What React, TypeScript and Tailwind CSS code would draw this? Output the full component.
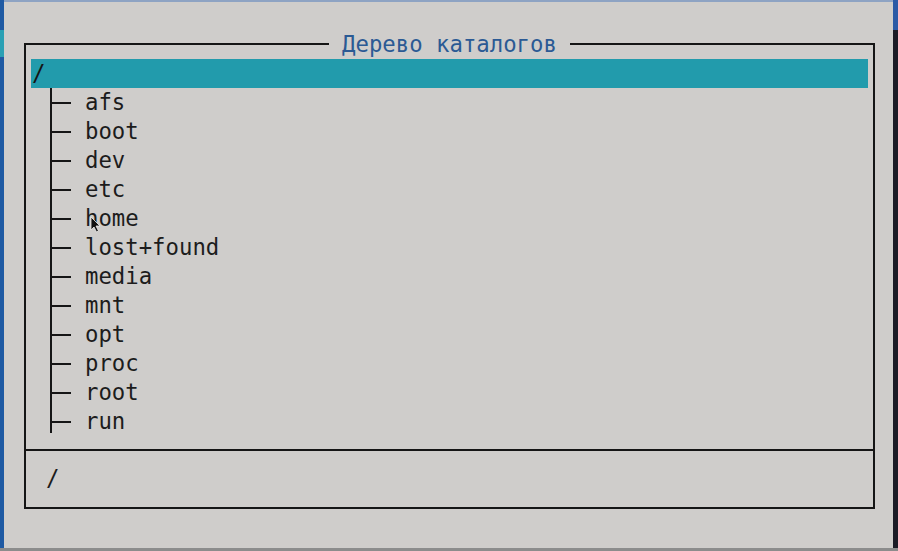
import React from "react";

const items = ["afs", "boot", "dev", "etc", "home", "lost+found", "media", "mnt", "opt", "proc", "root", "run"];

export default function App() {
  const mono = { fontFamily: '"DejaVu Sans Mono", "Liberation Mono", monospace' };
  return (
    <div className="relative w-[898px] h-[551px] overflow-hidden bg-[#cfcdcb]" style={mono}>
      {/* top strip */}
      <div className="absolute left-0 top-0 w-[898px] h-[2px] bg-[#8ea3c3]" />
      {/* left strip */}
      <div className="absolute left-0 top-0 w-[4px] h-[551px] bg-[#1f5aa3]">
        <div className="mt-[30px] h-[27px] bg-[#2aa0b4]" />
      </div>
      {/* right strip */}
      <div className="absolute right-0 top-0 w-[5px] h-[551px] bg-[#1b1b26]">
        <div className="h-[30px] bg-[#2c5aa6]" />
      </div>
      {/* bottom strip */}
      <div className="absolute left-0 bottom-0 w-[898px] h-[3px] bg-[#8c8c8c]" />

      {/* dialog */}
      <div className="pt-[43px] pl-[24px]">
        <div className="relative w-[851px] h-[466px] border-2 border-[#151515] flex flex-col">
          <div className="absolute left-0 right-0 -top-[15px] flex justify-center">
            <span className="bg-[#cfcdcb] px-[13px] text-[22.3px] leading-[28px] text-[#2b5a94]">
              Дерево каталогов
            </span>
          </div>
          <div className="h-[406px] pt-[14px] border-b-2 border-[#151515]">
            <div className="mx-[5px] h-[29px] bg-[#229bac] flex items-center text-[22.3px] text-[#151515] leading-[29px] pl-[1px]">
              /
            </div>
            {items.map((it, i) => (
              <div key={it} className="relative flex h-[29px] items-center text-[22.3px] leading-[29px] text-[#1c1c1c]">
                <div className="w-[24px]" />
                <div className={i === items.length - 1 ? "self-start h-[26px] w-[2px] bg-[#151515]" : "self-stretch w-[2px] bg-[#151515]"} />
                <div className="w-[19px] h-[2px] bg-[#151515]" />
                <div className="w-[14px]" />
                <span>{it}</span>
                {it === "home" && (
                  <svg className="absolute left-[64px] top-[12px]" width="11" height="17" viewBox="0 0 11 17">
                    <path d="M1 1 L1 14 L4 11 L6.5 16 L8.5 15 L6 10 L10 10 Z" fill="#111" stroke="#eee" strokeWidth="0.8" />
                  </svg>
                )}
              </div>
            ))}
          </div>
          <div className="flex-1 flex items-center pl-[20px] text-[22.3px] text-[#1c1c1c]">/</div>
        </div>
      </div>
    </div>
  );
}
